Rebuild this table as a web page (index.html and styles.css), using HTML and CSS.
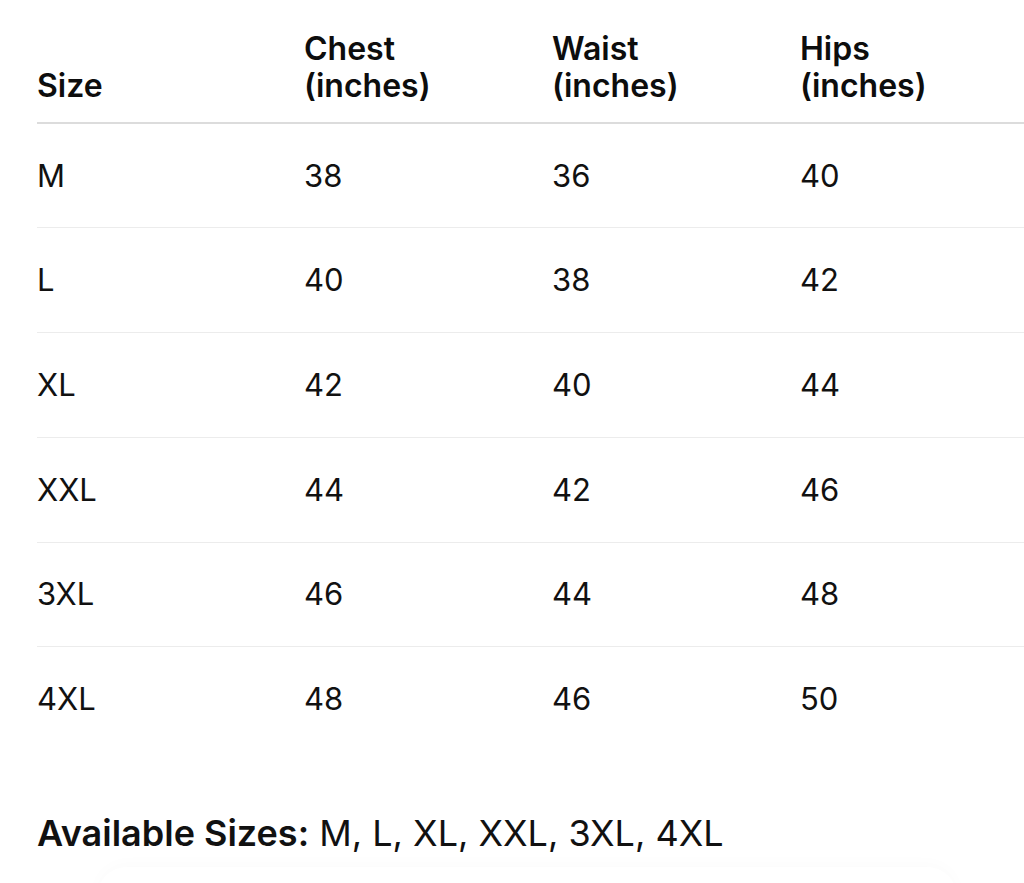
FILE: index.html
```html
<!DOCTYPE html>
<html lang="en">
<head>
<meta charset="utf-8">
<title>Size Chart</title>
<link rel="stylesheet" href="styles.css">
</head>
<body>
<main class="page">
  <table class="chart">
    <thead>
      <tr>
        <th class="c-size">Size</th>
        <th class="c-col">Chest<br>(inches)</th>
        <th class="c-col">Waist<br>(inches)</th>
        <th>Hips<br>(inches)</th>
      </tr>
    </thead>
    <tbody>
      <tr><td>M</td><td>38</td><td>36</td><td>40</td></tr>
      <tr><td>L</td><td>40</td><td>38</td><td>42</td></tr>
      <tr><td>XL</td><td>42</td><td>40</td><td>44</td></tr>
      <tr><td>XXL</td><td>44</td><td>42</td><td>46</td></tr>
      <tr><td>3XL</td><td>46</td><td>44</td><td>48</td></tr>
      <tr><td>4XL</td><td>48</td><td>46</td><td>50</td></tr>
    </tbody>
  </table>
  <p class="available"><strong>Available Sizes:</strong> M, L, XL, XXL, 3XL, 4XL</p>
  <div class="next-card"></div>
</main>
</body>
</html>
```

FILE: styles.css
```css
* { box-sizing: border-box; }
html, body { margin: 0; padding: 0; background: #fff; }
body {
  font-family: Inter, "Liberation Sans", Arial, sans-serif;
  color: #111;
  overflow: hidden;
  height: 883px;
}
.page {
  padding: 0 0 0 37px;
}
.chart {
  width: 987px;
  border-collapse: collapse;
  table-layout: fixed;
}
.chart th {
  text-align: left;
  vertical-align: bottom;
  font-weight: 600;
  font-size: 32px;
  line-height: 37px;
  padding: 30px 0 18px 0;
  border-bottom: 2px solid #dcdcdc;
  color: #0d0d0d;
}
.chart th.c-size { width: 267px; }
.chart th.c-col { width: 248px; }
.chart td {
  font-size: 31px;
  font-weight: 400;
  height: 104.75px;
  padding: 0 0 1px 0;
  vertical-align: middle;
  border-bottom: 1px solid #ececec;
}
.chart tbody tr:last-child td { border-bottom: none; }
.available {
  margin: 61px 0 0 0;
  font-size: 36px;
  line-height: 40px;
  font-weight: 400;
}
.available strong { font-weight: 600; }
.next-card {
  margin: 14px 0 0 60px;
  width: 860px;
  height: 60px;
  border-radius: 40px;
  box-shadow: 0 -3px 16px rgba(0,0,0,0.018);
}
```
